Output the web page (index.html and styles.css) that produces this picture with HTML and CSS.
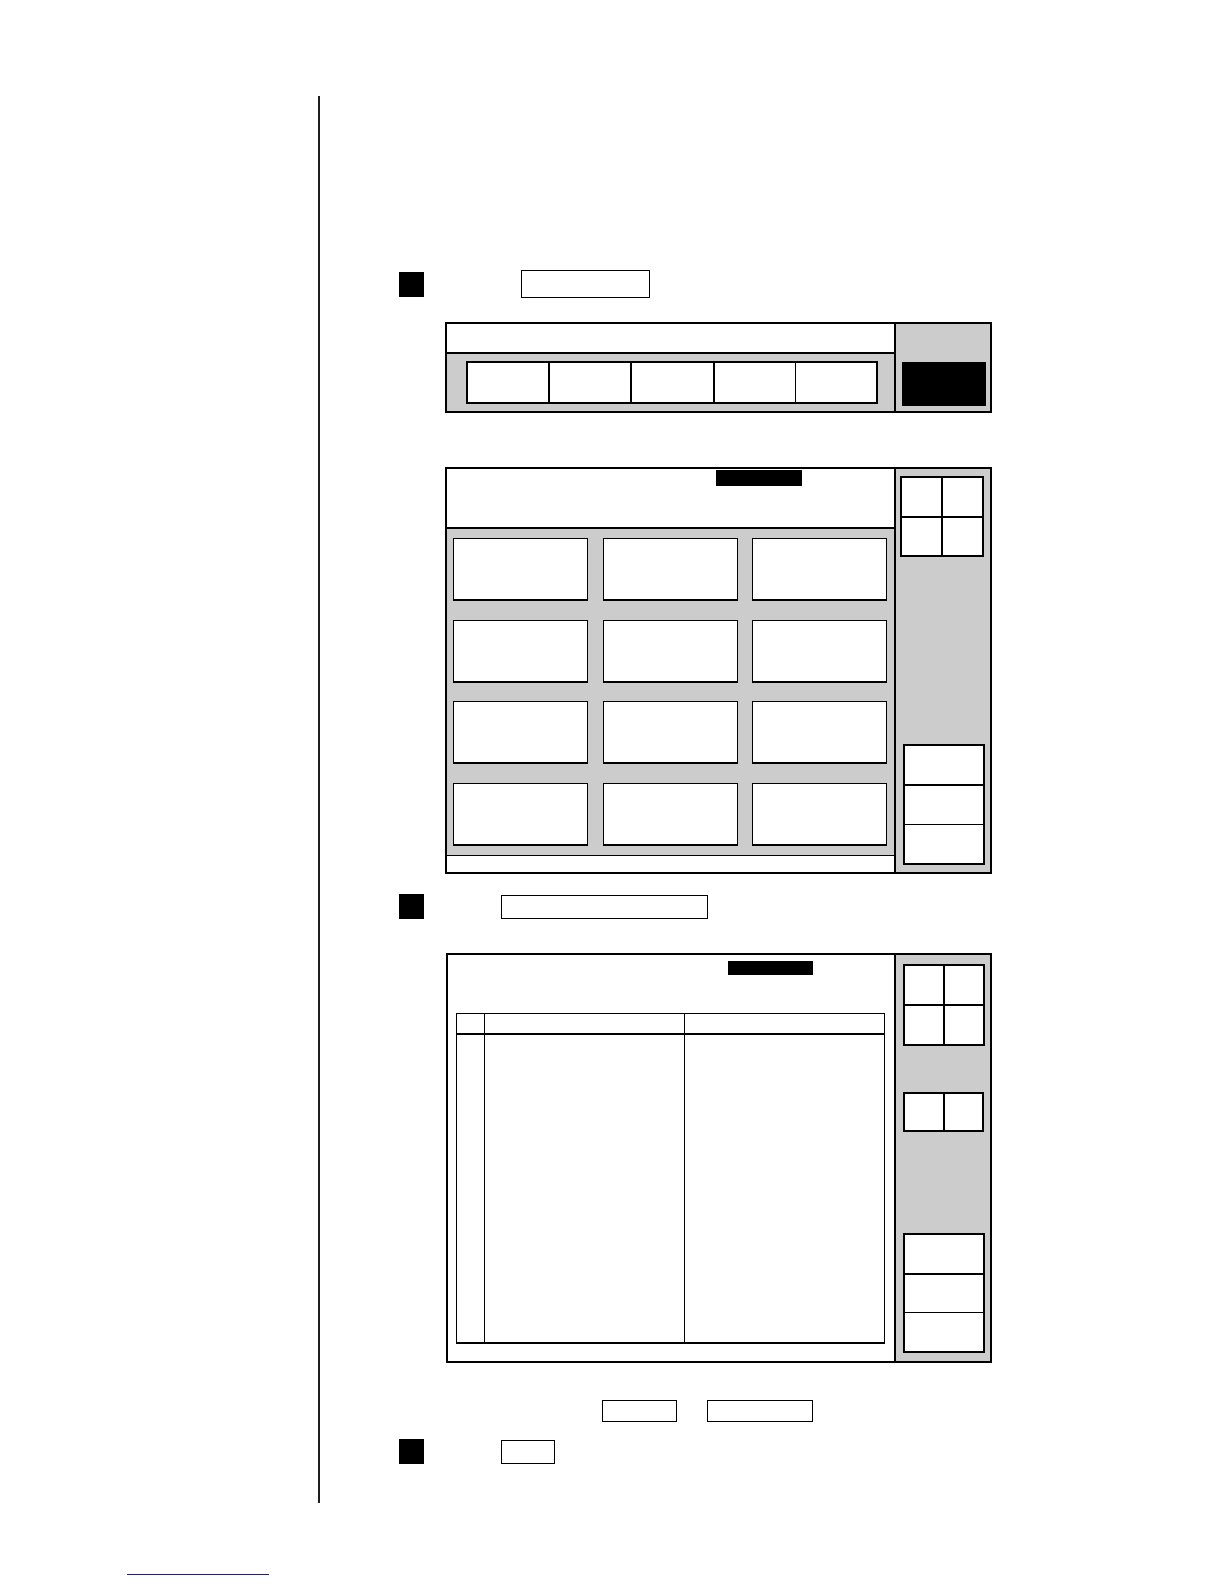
FILE: index.html
```html
<!DOCTYPE html>
<html lang="en">
<head>
<meta charset="utf-8">
<title>Screen sequence</title>
<link rel="stylesheet" href="styles.css">
</head>
<body>
<div class="sheet">
  <div class="step step-1">
    <div class="num"></div>
    <div class="key key-a"></div>
  </div>

  <div class="panel panel-1">
    <div class="p1-left">
      <div class="p1-head"></div>
      <div class="p1-body">
        <div class="softkeys">
          <div class="sk"></div><div class="sk"></div><div class="sk"></div><div class="sk sk-thin"></div><div class="sk"></div>
        </div>
      </div>
    </div>
    <div class="side p1-side">
      <div class="black-btn"></div>
    </div>
  </div>

  <div class="panel panel-2">
    <div class="p2-left">
      <div class="p2-head"><div class="label label-2"></div></div>
      <div class="tiles">
        <div class="tile"></div><div class="tile"></div><div class="tile"></div>
        <div class="tile"></div><div class="tile"></div><div class="tile"></div>
        <div class="tile"></div><div class="tile"></div><div class="tile"></div>
        <div class="tile"></div><div class="tile"></div><div class="tile"></div>
      </div>
      <div class="p2-foot"></div>
    </div>
    <div class="side p2-side">
      <div class="quad quad-2"><div></div><div></div><div></div><div></div></div>
      <div class="stack stack-2"><div class="st"></div><div class="st st-thin"></div><div class="st"></div></div>
    </div>
  </div>

  <div class="step step-2">
    <div class="num"></div>
    <div class="key key-b"></div>
  </div>

  <div class="panel panel-3">
    <div class="p3-left">
      <div class="label label-3"></div>
      <div class="tbl">
        <div class="th c1"></div><div class="th c2"></div><div class="th c3"></div>
        <div class="td c1"></div><div class="td c2"></div><div class="td c3"></div>
      </div>
    </div>
    <div class="side p3-side">
      <div class="quad quad-3"><div></div><div></div><div></div><div></div></div>
      <div class="pair"><div></div><div></div></div>
      <div class="stack stack-3"><div class="st"></div><div class="st st-thin"></div><div class="st"></div></div>
    </div>
  </div>

  <div class="keys-row">
    <div class="key key-c"></div>
    <div class="key key-d"></div>
  </div>

  <div class="step step-3">
    <div class="num"></div>
    <div class="key key-e"></div>
  </div>
</div>
<div class="footer-rule"></div>
</body>
</html>
```

FILE: styles.css
```css
* { box-sizing: border-box; }

html, body {
  margin: 0;
  padding: 0;
  background: #ffffff;
  font-family: "Liberation Sans", Arial, sans-serif;
}

body {
  width: 1224px;
  height: 1584px;
  overflow: hidden;
  padding-top: 96px;
}

.sheet {
  display: flow-root;
  margin-left: 318px;
  border-left: 2px solid #1e1e1e;
  height: 1407px;
}

/* step rows */
.step {
  display: flex;
  align-items: center;
}
.num {
  width: 25px;
  height: 25px;
  background: #000;
  margin-left: 79px;
  flex: none;
}
.key {
  border: 1px solid #000;
  background: #fff;
  flex: none;
}
.step-1 { margin-top: 174px; height: 28px; }
.key-a { margin-left: 97px; width: 129px; height: 28px; }

.step-2 { margin-top: 20px; height: 25px; }
.key-b { margin-left: 77px; width: 207px; height: 24px; }

.keys-row { display: flex; margin-top: 37px; height: 22px; }
.key-c { margin-left: 282px; width: 75px; height: 22px; }
.key-d { margin-left: 30px; width: 106px; height: 22px; }

.step-3 { margin-top: 17px; height: 25px; }
.key-e { margin-left: 77px; width: 54px; height: 24px; }

/* panels */
.panel {
  border: 2px solid #000;
  display: grid;
  width: 547px;
  margin-left: 125px;
}
.side {
  background: #cccccc;
  border-left: 2px solid #000;
}

/* panel 1 */
.panel-1 {
  margin-top: 24px;
  height: 91px;
  grid-template-columns: 447px 96px;
}
.p1-head {
  height: 30px;
  background: #fff;
  border-bottom: 2px solid #000;
}
.p1-body {
  height: 57px;
  background: #cccccc;
  padding: 7px 0 0 19px;
}
.softkeys {
  display: flex;
  width: 412px;
  height: 43px;
  border: 2px solid #000;
  background: #fff;
}
.sk { flex: 1; border-right: 2px solid #000; }
.sk-thin { border-right-width: 1px; }
.sk:last-child { border-right: none; }
.p1-side { padding: 38px 0 0 6px; }
.black-btn { width: 84px; height: 44px; background: #000; }

/* panel 2 */
.panel-2 {
  margin-top: 54px;
  height: 407px;
  grid-template-columns: 447px 96px;
}
.p2-left { display: flex; flex-direction: column; }
.p2-head {
  height: 60px;
  background: #fff;
  border-bottom: 2px solid #000;
  padding: 1px 0 0 269px;
}
.label { background: #000; }
.label-2 { width: 86px; height: 16px; }
.tiles {
  height: 326px;
  background: #cccccc;
  display: grid;
  grid-template-columns: repeat(3, 135px);
  grid-template-rows: repeat(4, 63px);
  column-gap: 14.5px;
  row-gap: 18.5px;
  align-content: start;
  padding: 9px 0 0 6px;
}
.tile {
  background: #fff;
  border: 1px solid #000;
  border-bottom-width: 2px;
}
.p2-foot {
  height: 17px;
  background: #fff;
  border-top: 1px solid #000;
}
.p2-side {
  display: flex;
  flex-direction: column;
  justify-content: space-between;
  padding: 7px 0 7px 4px;
}

.quad {
  display: grid;
  grid-template-columns: 1fr 1fr;
  grid-template-rows: 1fr 1fr;
  gap: 2px;
  background: #000;
  border: 2px solid #000;
}
.quad > div, .pair > div { background: #fff; }
.quad-2 { width: 84px; height: 81px; }
.quad-3 { width: 82px; height: 82px; }

.pair {
  display: grid;
  grid-template-columns: 1fr 1fr;
  gap: 2px;
  background: #000;
  border: 2px solid #000;
  width: 81px;
  height: 40px;
  margin-top: 46px;
}

.stack {
  display: flex;
  flex-direction: column;
  border: 2px solid #000;
  background: #fff;
  width: 82px;
}
.st { flex: 1; border-bottom: 2px solid #000; }
.st-thin { border-bottom-width: 1px; }
.st:last-child { border-bottom: none; }
.stack-2 { height: 121px; margin-left: 3px; }
.stack-3 { height: 120px; margin-top: auto; }

/* panel 3 */
.panel-3 {
  margin-top: 34px;
  margin-left: 126px;
  width: 546px;
  height: 410px;
  grid-template-columns: 446px 96px;
}
.p3-left {
  background: #fff;
  padding: 6px 0 0 8px;
}
.label-3 { width: 85px; height: 14px; margin-left: 272px; }
.tbl {
  margin-top: 38px;
  width: 429px;
  height: 331px;
  display: grid;
  grid-template-columns: 28px 200px 1fr;
  grid-template-rows: 21px 1fr;
  border-top: 1px solid #000;
  border-left: 1px solid #000;
  border-right: 1px solid #000;
  border-bottom: 2px solid #000;
}
.th { border-bottom: 2px solid #000; }
.c1, .c2 { border-right: 1px solid #000; }
.p3-side {
  display: flex;
  flex-direction: column;
  padding: 9px 0 8px 7px;
}

.footer-rule {
  margin-top: 71px;
  margin-left: 127px;
  width: 142px;
  height: 1px;
  background: #1c1c90;
}
```
